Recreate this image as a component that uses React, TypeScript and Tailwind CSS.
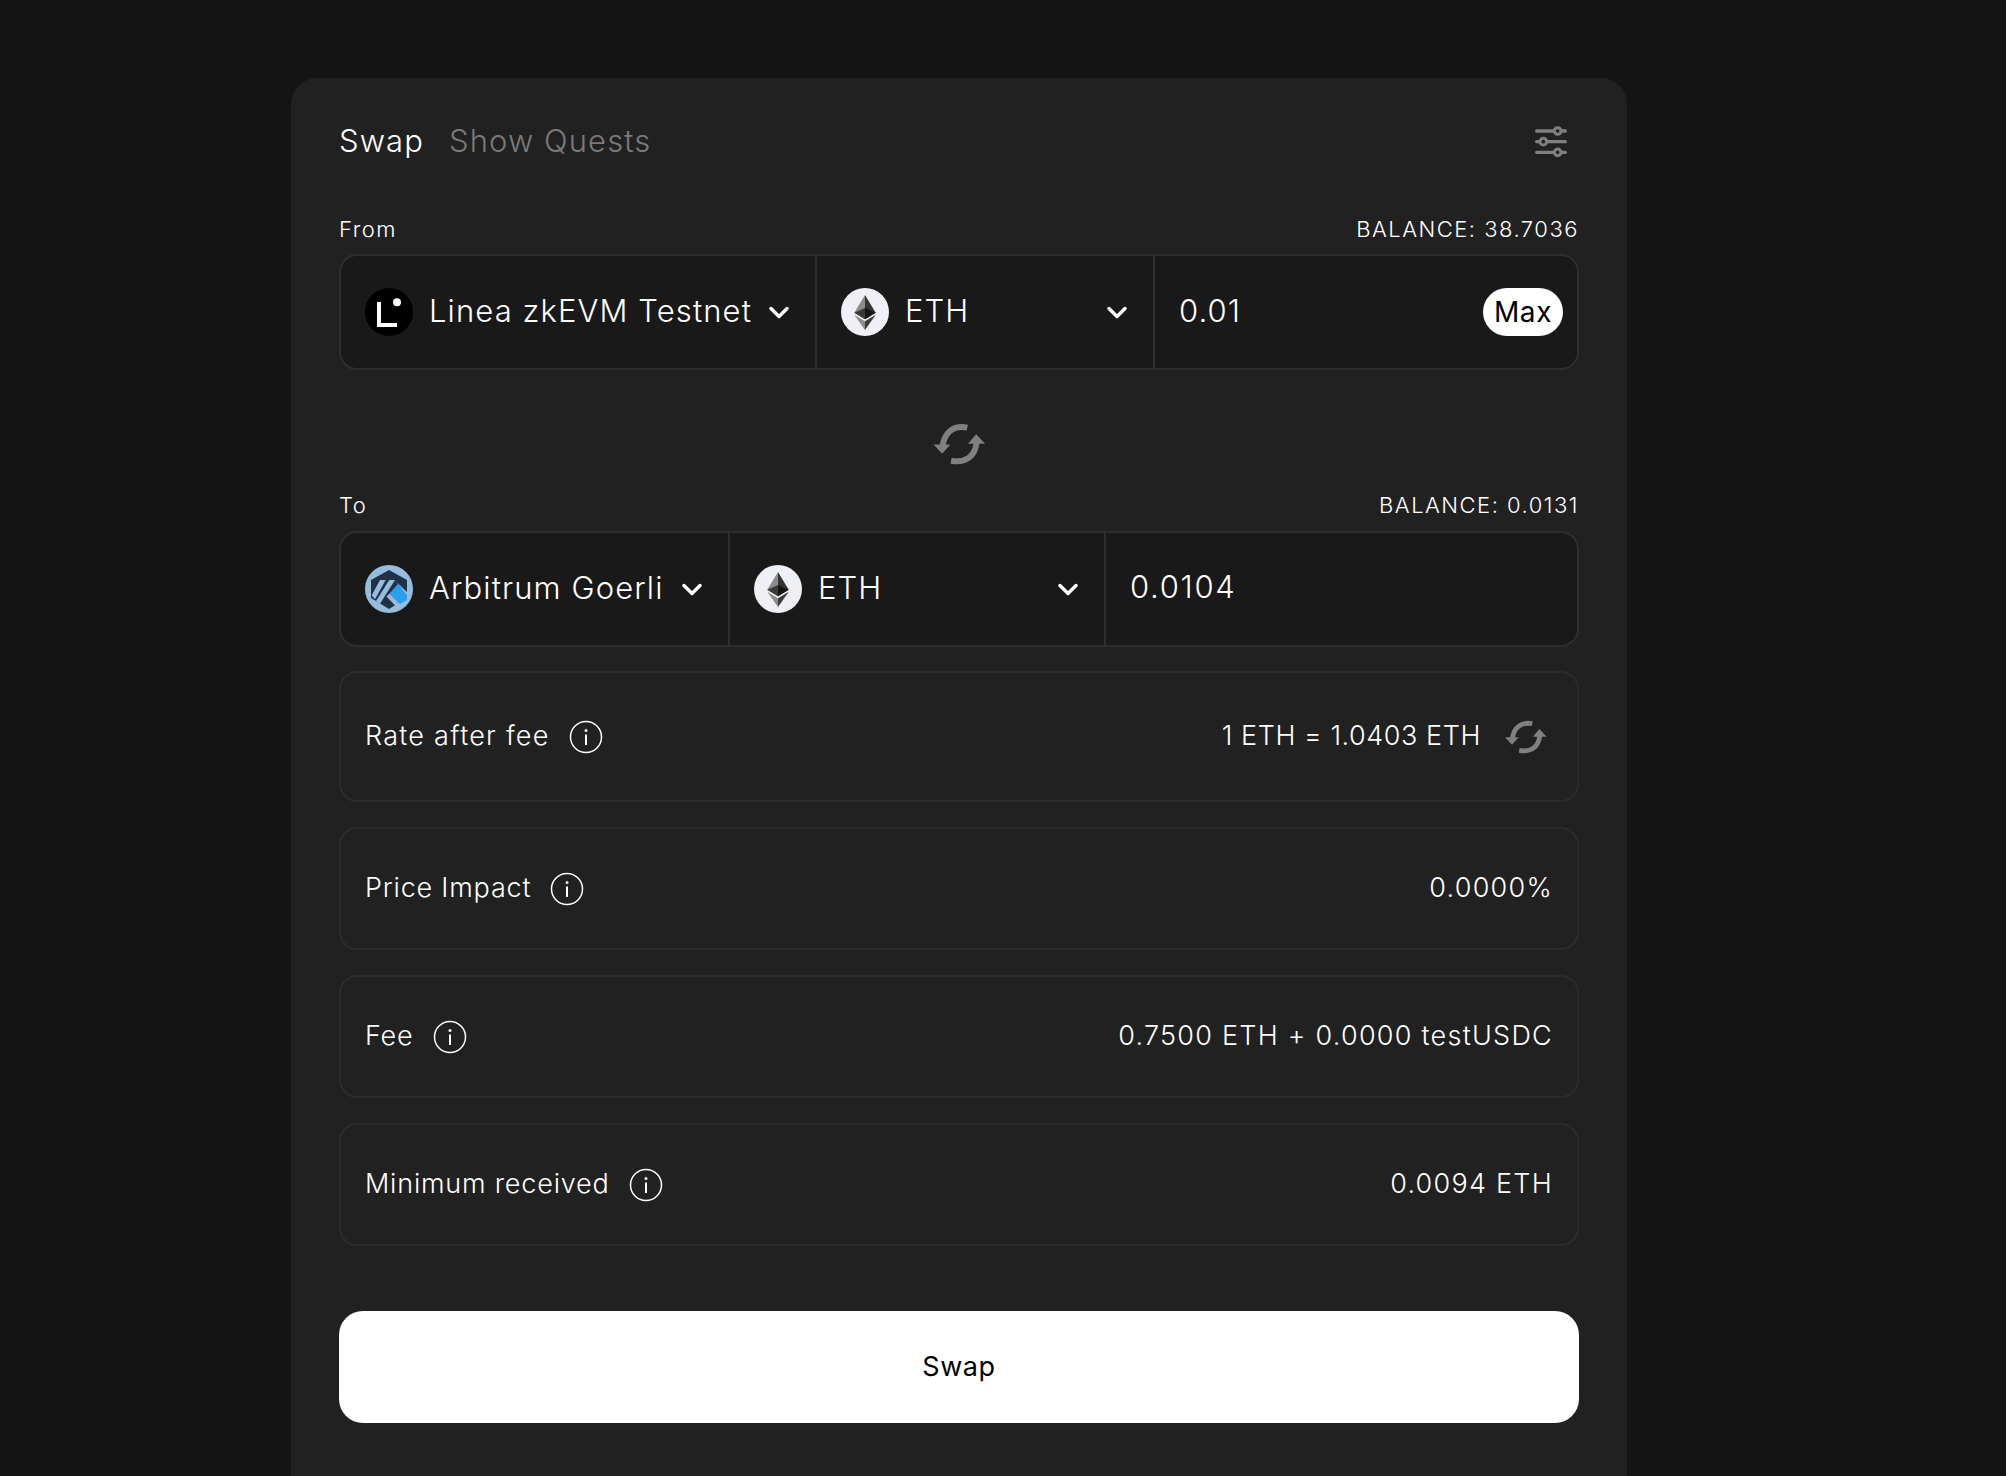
import { ReactNode } from "react";

function Chevron() {
  return (
    <svg width="20" height="13" viewBox="0 0 20 13" fill="none" className="shrink-0">
      <path d="M2 2.5l8 8 8-8" stroke="#fff" strokeWidth="3.4" strokeLinecap="round" strokeLinejoin="round" />
    </svg>
  );
}

function EthIcon() {
  return (
    <div className="w-12 h-12 rounded-full bg-[#eff0f5] flex items-center justify-center shrink-0">
      <svg width="22" height="35" viewBox="0 0 256 417">
        <polygon fill="#343434" points="128,0 256,212.3 128,288 128,154" />
        <polygon fill="#8c8c8c" points="128,0 0,212.3 128,288 128,154" />
        <polygon fill="#3c3c3b" points="128,312.2 256,236.6 128,417" />
        <polygon fill="#8c8c8c" points="128,312.2 0,236.6 128,417" />
        <polygon fill="#141414" points="128,288 256,212.3 128,154" />
        <polygon fill="#393939" points="0,212.3 128,288 128,154" />
      </svg>
    </div>
  );
}

function LineaIcon() {
  return (
    <svg width="48" height="48" viewBox="0 0 48 48" className="shrink-0">
      <circle cx="24" cy="24" r="24" fill="#000" />
      <path d="M12 14h4v21h16v4H12z" fill="#fff" />
      <circle cx="32" cy="14.300" r="4" fill="#fff" />
    </svg>
  );
}

function ArbitrumIcon() {
  return (
    <svg width="48" height="48" viewBox="0 0 48 48" className="shrink-0">
      <circle cx="24" cy="24" r="24" fill="#96bedc" />
      <polygon fill="#213147" points="24,5 42,15 42,33 24,44 6,33 6,15" />
      <polygon fill="#96bedc" points="15,15 20.700,15 10,34.300 6.700,30.300" />
      <polygon fill="#96bedc" points="24.300,15 30,15 15,38.700 11,36" />
      <polygon fill="#96bedc" points="31,16.500 42,27 42,31 33,19" />
      <polygon fill="#28a0f0" points="33,19 42,31 42,35 35,39 24.500,28.500" />
      <polygon fill="#96bedc" points="24.500,28.500 35,39 31,41.500 21.500,31.500" />
    </svg>
  );
}

function SwapArrows({ className }: { className: string }) {
  return (
    <svg viewBox="35 35 165 130" fill="none" className={className}>
      <path d="M141 52C100 44 72 65 66 108" stroke="#808080" strokeWidth="18" />
      <path d="M39 103h51l-25 28z" fill="#808080" />
      <path d="M92 152c43 8 73-12 77-55" stroke="#808080" strokeWidth="18" />
      <path d="M143 101h52l-27-29z" fill="#808080" />
    </svg>
  );
}

function SettingsIcon() {
  return (
    <svg width="32" height="34" viewBox="45 45 96 102" fill="none">
      <g stroke="#808080" strokeWidth="10" strokeLinecap="round">
        <path d="M50 63h86M50 95h86M50 127h86" />
      </g>
      <g stroke="#808080" strokeWidth="9" fill="#212121">
        <circle cx="113" cy="63" r="10" />
        <circle cx="70" cy="95" r="10" />
        <circle cx="113" cy="127" r="10" />
      </g>
    </svg>
  );
}

function InfoIcon() {
  return (
    <svg width="34" height="34" viewBox="0 0 34 34" fill="none" className="shrink-0">
      <circle cx="17" cy="17" r="15.500" stroke="#fff" strokeWidth="1.500" />
      <path d="M17 14.500V25" stroke="#fff" strokeWidth="2" />
      <circle cx="17" cy="10.500" r="1.500" fill="#fff" />
    </svg>
  );
}

function Label({ left, right }: { left: string; right: string }) {
  return (
    <div className="flex justify-between items-center h-[28px] text-[22px] tracking-[1.5px] text-white">
      <span>{left}</span>
      <span>{right}</span>
    </div>
  );
}

function SelectCell({ icon, label, className }: { icon: ReactNode; label: string; className: string }) {
  return (
    <div className={`flex items-center justify-between pl-[24px] pr-[26px] border-r-2 border-[#2e2e2e] ${className}`}>
      <div className="flex items-center gap-[16px]">
        {icon}
        <span className="text-[31px] leading-none pb-[4px] tracking-[1.1px] text-white whitespace-nowrap">{label}</span>
      </div>
      <Chevron />
    </div>
  );
}

function InfoRow({
  label,
  value,
  height,
  labelClass = "tracking-[0.8px]",
  valueClass = "tracking-[1.25px]",
  children,
}: {
  label: string;
  value: string;
  height: string;
  labelClass?: string;
  valueClass?: string;
  children?: ReactNode;
}) {
  return (
    <div className={`flex items-center justify-between px-[24px] border-2 border-[#2c2c2c] rounded-[18px] ${height}`}>
      <div className={`flex items-center gap-[19px] text-[27px] text-white ${labelClass}`}>
        <span>{label}</span>
        <InfoIcon />
      </div>
      <div className={`flex items-center gap-[23px] text-[27px] text-white ${valueClass}`}>
        <span>{value}</span>
        {children}
      </div>
    </div>
  );
}

export default function App() {
  return (
    <div className="h-screen overflow-hidden bg-[#141414] pl-[291px] pt-[78px] font-['Inter',sans-serif] font-light">
      <div className="w-[1336px] h-[1398px] bg-[#212121] rounded-t-[26px] px-[48px]">
        {/* Header */}
        <div className="flex items-center justify-between h-[126px]">
          <div className="flex items-center gap-[25px] text-[31px] tracking-[1.1px]">
            <span className="text-white">Swap</span>
            <span className="text-[#7a7a7a]">Show Quests</span>
          </div>
          <div className="mr-[12px] mt-[2px]">
            <SettingsIcon />
          </div>
        </div>

        {/* From */}
        <div className="mt-[11px]">
          <Label left="From" right="BALANCE: 38.7036" />
        </div>
        <div className="flex h-[116px] mt-[11px] bg-[#191919] border-2 border-[#2e2e2e] rounded-[18px]">
          <SelectCell icon={<LineaIcon />} label="Linea zkEVM Testnet" className="w-[476px]" />
          <SelectCell icon={<EthIcon />} label="ETH" className="w-[338px]" />
          <div className="flex-1 flex items-center justify-between pl-[24px] pr-[14px]">
            <span className="text-[31px] pb-[2px] tracking-[1.1px] text-white">0.01</span>
            <span className="w-[80px] h-[48px] rounded-full bg-white flex items-center justify-center text-[28px] tracking-[0.6px] text-black font-normal">Max</span>
          </div>
        </div>

        <div className="flex justify-center h-[121px] pt-[52px]">
          <SwapArrows className="w-[55px] h-[43px]" />
        </div>

        {/* To */}
        <Label left="To" right="BALANCE: 0.0131" />
        <div className="flex h-[116px] mt-[12px] bg-[#191919] border-2 border-[#2e2e2e] rounded-[18px]">
          <SelectCell icon={<ArbitrumIcon />} label="Arbitrum Goerli" className="w-[389px]" />
          <SelectCell icon={<EthIcon />} label="ETH" className="w-[376px]" />
          <div className="flex-1 flex items-center pl-[24px]">
            <span className="text-[31px] pb-[3px] tracking-[1.7px] text-white">0.0104</span>
          </div>
        </div>

        {/* Details */}
        <div className="flex flex-col gap-[25px] mt-[24px]">
          <InfoRow
            label="Rate after fee"
            value="1 ETH = 1.0403 ETH"
            height="h-[131px]"
            labelClass="tracking-[1.25px]"
            valueClass="tracking-[0.55px]"
          >
            <SwapArrows className="w-[44px] h-[35px] mr-[5px]" />
          </InfoRow>
          <InfoRow label="Price Impact" value="0.0000%" height="h-[123px]" />
          <InfoRow label="Fee" value="0.7500 ETH + 0.0000 testUSDC" height="h-[123px]" />
          <InfoRow label="Minimum received" value="0.0094 ETH" height="h-[123px]" />
        </div>

        <button className="w-full h-[112px] mt-[65px] bg-white rounded-[24px] text-[27px] tracking-[0.6px] font-normal text-black">
          Swap
        </button>
      </div>
    </div>
  );
}
